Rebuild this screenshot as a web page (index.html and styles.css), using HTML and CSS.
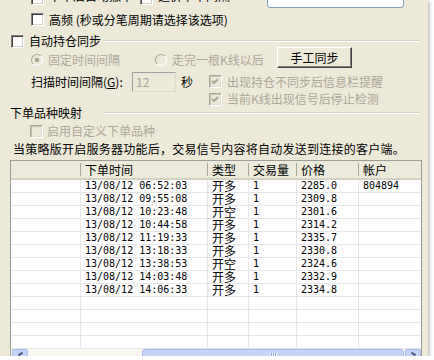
FILE: index.html
```html
<!DOCTYPE html>
<html lang="zh-CN">
<head>
    <meta charset="UTF-8">
    <meta name="viewport" content="width=device-width, initial-scale=1.0">
    <title>服务器设置</title>
    <link rel="stylesheet" href="styles.css">
</head>
<body>
    <div class="window">
        <!-- row cut off by the top edge -->
        <div class="row row-cut">
            <span class="chk"></span>
            <span class="lbl cut-a">下单后自动撤单</span>
            <span class="chk"></span>
            <span class="lbl cut-b">追价下单间隔</span>
            <span class="edit"></span>
        </div>

        <div class="row row-hf">
            <span class="chk"></span>
            <span class="lbl">高频 (秒或分笔周期请选择该选项)</span>
        </div>

        <div class="row group-title g-sync">
            <span class="chk"></span>
            <span class="lbl">自动持仓同步</span>
            <span class="rule"></span>
        </div>

        <div class="row row-radio">
            <span class="radio on"></span>
            <span class="lbl dis radio-a">固定时间间隔</span>
            <span class="radio second"></span>
            <span class="lbl dis radio-b">走完一根K线以后</span>
            <button class="btn" type="button">手工同步</button>
        </div>

        <div class="scan">
            <div class="row scan-left">
                <span class="lbl scan-lbl">扫描时间间隔(<u>G</u>):</span>
                <input class="edit-dis" type="text" value="12" disabled>
                <span class="lbl sec">秒</span>
            </div>
            <div class="scan-right">
                <div class="row chk-row1">
                    <span class="chk dis"><svg width="11" height="11" viewBox="0 0 11 11"><polyline points="2,5 4,7 8,3" fill="none" stroke="#aca899" stroke-width="2"/></svg></span>
                    <span class="lbl dis">出现持仓不同步后信息栏提醒</span>
                </div>
                <div class="row chk-row2">
                    <span class="chk dis"><svg width="11" height="11" viewBox="0 0 11 11"><polyline points="2,5 4,7 8,3" fill="none" stroke="#aca899" stroke-width="2"/></svg></span>
                    <span class="lbl dis">当前K线出现信号后停止检测</span>
                </div>
            </div>
        </div>

        <div class="row group-title g-map">
            <span class="lbl">下单品种映射</span>
            <span class="rule"></span>
        </div>

        <div class="row row-custom">
            <span class="chk dis"></span>
            <span class="lbl dis">启用自定义下单品种</span>
        </div>

        <div class="row row-note">
            <span class="lbl">当策略版开启服务器功能后，交易信号内容将自动发送到连接的客户端。</span>
        </div>

        <div class="listview">
            <div class="lv-head">
                <div class="hcell"></div>
                <div class="hcell">下单时间</div>
                <div class="hcell">类型</div>
                <div class="hcell">交易量</div>
                <div class="hcell">价格</div>
                <div class="hcell last">帐户</div>
            </div>
            <div class="lv-body" id="lvBody">
                <!-- rows are filled in by the script -->
            </div>
            <div class="hscroll">
                <span class="sb-btn sb-left"></span>
                <span class="sb-track"></span>
                <span class="sb-thumb"><span class="grip"></span></span>
                <span class="sb-btn sb-right"></span>
            </div>
        </div>
    </div>

    <script>
        document.addEventListener('DOMContentLoaded', function() {
            const lvBody = document.getElementById('lvBody');

            // orders sent to the clients
            const orders = [
                { time: '13/08/12 06:52:03', type: '开多', qty: 1, price: '2285.0', account: '804894' },
                { time: '13/08/12 09:55:08', type: '开多', qty: 1, price: '2309.8', account: '' },
                { time: '13/08/12 10:23:48', type: '开空', qty: 1, price: '2301.6', account: '' },
                { time: '13/08/12 10:44:58', type: '开多', qty: 1, price: '2314.2', account: '' },
                { time: '13/08/12 11:19:33', type: '开多', qty: 1, price: '2335.7', account: '' },
                { time: '13/08/12 13:18:33', type: '开多', qty: 1, price: '2330.8', account: '' },
                { time: '13/08/12 13:38:53', type: '开空', qty: 1, price: '2324.6', account: '' },
                { time: '13/08/12 14:03:48', type: '开多', qty: 1, price: '2332.9', account: '' },
                { time: '13/08/12 14:06:33', type: '开多', qty: 1, price: '2334.8', account: '' }
            ];

            orders.forEach(order => {
                const row = document.createElement('div');
                row.className = 'lv-row';
                row.innerHTML = `
                    <div class="cell"></div>
                    <div class="cell num">${order.time}</div>
                    <div class="cell cjk">${order.type}</div>
                    <div class="cell num">${order.qty}</div>
                    <div class="cell num">${order.price}</div>
                    <div class="cell num last">${order.account}</div>
                `;
                lvBody.appendChild(row);
            });

            // empty grid lines below the data
            for (let i = 0; i < 4; i++) {
                const row = document.createElement('div');
                row.className = 'lv-row';
                row.innerHTML = '<div class="cell"></div><div class="cell"></div><div class="cell"></div><div class="cell"></div><div class="cell"></div><div class="cell last"></div>';
                lvBody.appendChild(row);
            }
        });
    </script>
</body>
</html>
```

FILE: styles.css
```css
/* Windows XP style settings panel */
body {
    margin: 0;
    background: #fff;
    font-family: "Noto Sans CJK SC", "Liberation Sans", sans-serif;
    font-size: 12px;
    line-height: 14px;
    color: #000;
}

.window {
    width: 428px;
    height: 356px;
    background: #ece9d8;
    overflow: hidden;
    box-shadow: 1px 1px 4px rgba(0, 0, 0, 0.35);
}

.row {
    display: flex;
    align-items: center;
    white-space: nowrap;
}

.lbl {
    flex: none;
}

.dis {
    color: #aca899;
}

/* checkboxes */
.chk {
    flex: none;
    display: inline-flex;
    align-items: center;
    justify-content: center;
    width: 13px;
    height: 13px;
    box-sizing: border-box;
    background: #fff;
    border: 1px solid;
    border-color: #808080 #fff #fff #808080;
    box-shadow: inset 1px 1px #404040, inset -1px -1px #d4d0c8;
}

.chk.dis {
    background: #ece9d8;
    border-color: #aca899 #fff #fff #aca899;
    box-shadow: inset 1px 1px #c4c1b2, inset -1px -1px #e2dfd2;
}

.chk svg {
    display: block;
}

.radio {
    flex: none;
    width: 12px;
    height: 12px;
    box-sizing: border-box;
    border-radius: 50%;
    border: 1px solid;
    border-color: #aca899 #fff #fff #aca899;
    background: #ece9d8;
}

.radio.on {
    background: radial-gradient(circle, #aca899 0 2px, #ece9d8 2.5px);
}

/* cut off row */
.row-cut {
    height: 18px;
    margin-top: -10px;
    padding-left: 31px;
}

.row-cut .chk {
    margin-top: -2px;
}

.row-cut .lbl {
    align-self: flex-start;
    margin-left: 5px;
    margin-top: -1px;
}

.cut-a {
    width: 91px;
}

.cut-b {
    width: 96px;
}

.edit {
    align-self: flex-end;
    width: 137px;
    height: 20px;
    box-sizing: border-box;
    margin-left: 13px;
    background: #fff;
    border: 1px solid #7f9db9;
    border-radius: 3px;
}

.row-hf {
    height: 23px;
    padding-left: 31px;
}

.row-hf .lbl {
    margin-left: 5px;
}

/* group titles with etched line */
.group-title .rule {
    flex: 1;
    height: 0;
    border-top: 1px solid #d0d0bf;
    border-bottom: 1px solid #fff;
    margin-right: 9px;
}

.g-sync {
    height: 20px;
    padding-left: 11px;
}

.g-sync .lbl {
    margin-left: 5px;
}

.g-sync .rule {
    margin-left: 3px;
}

.row-radio {
    height: 18px;
    padding-left: 31px;
}

.row-radio .lbl {
    margin-left: 5px;
}

.radio-a {
    width: 72px;
}

.radio.second {
    margin-left: 35px;
}

.radio-b {
    width: 92px;
}

.btn {
    align-self: flex-start;
    margin-top: -4px;
    margin-left: 13px;
    width: 75px;
    height: 21px;
    box-sizing: border-box;
    padding: 0;
    background: #ece9d8;
    border: 1px solid;
    border-color: #fff #404040 #404040 #fff;
    box-shadow: inset -1px -1px #808080;
    font: inherit;
    color: #000;
}

/* scan interval block */
.scan {
    display: flex;
    padding: 3px 0 0 31px;
}

.scan-left {
    width: 178px;
    height: 19px;
}

.scan-lbl {
    width: 98px;
}

.edit-dis {
    width: 44px;
    height: 20px;
    box-sizing: border-box;
    margin: 0 0 0 3px;
    padding: 0 0 0 3px;
    background: #ece9d8;
    border: 1px solid;
    border-color: #a0a0a0 #dedcd1 #dedcd1 #a0a0a0;
    font: inherit;
    color: #aca899;
}

.sec {
    margin-left: 5px;
}

.scan-right .lbl {
    margin-left: 5px;
}

.chk-row1 {
    height: 19px;
}

.chk-row2 {
    height: 16px;
}

.g-map {
    height: 12px;
    padding-left: 10px;
}

.g-map .rule {
    margin-left: 21px;
}

.row-custom {
    height: 24px;
    padding-left: 30px;
}

.row-custom .lbl {
    margin-left: 4px;
}

.row-note {
    height: 12px;
    padding-left: 13px;
    letter-spacing: 0.25px;
}

/* list view */
.listview {
    width: 412px;
    margin: 5px 0 0 10px;
    box-sizing: border-box;
    border: 1px solid #9d9d97;
    background: #fff;
}

.lv-head,
.lv-row {
    display: grid;
    grid-template-columns: 70px 127px 41px 48px 62px 62px;
}

.lv-head {
    height: 19px;
    box-sizing: border-box;
    background: #ebeadb;
    border-bottom: 2px solid #d6d2c2;
}

.hcell {
    padding-left: 4px;
    line-height: 17px;
    background: linear-gradient(#aca899, #aca899) no-repeat right 0 top 2px / 1px 13px;
}

.hcell.last {
    background: none;
}

.lv-row {
    height: 13px;
    box-sizing: border-box;
    border-bottom: 1px solid #e6e6e6;
}

.cell {
    padding-left: 4px;
    border-right: 1px solid #e6e6e6;
    line-height: 12px;
}

.cell.last {
    border-right: none;
}

.cell.cjk {
    font-size: 12px;
    line-height: 12px;
}

.cell.num {
    font-family: "DejaVu Sans Mono", "Liberation Mono", monospace;
    font-size: 10px;
}

/* horizontal scrollbar */
.hscroll {
    display: flex;
    height: 17px;
    padding-left: 1px;
    background: #f7f6f0;
}

.sb-btn {
    width: 16px;
    box-sizing: border-box;
    background: #c4d4f8;
    border: 1px solid #a8bbe9;
    border-radius: 2px;
    position: relative;
}

.sb-left::after,
.sb-right::after {
    content: "";
    position: absolute;
    top: 3px;
    left: 5px;
    width: 5px;
    height: 2px;
    background: #4d6185;
    transform: rotate(-35deg);
}

.sb-right::after {
    transform: rotate(35deg);
}

.sb-track {
    width: 114px;
}

.sb-thumb {
    width: 262px;
    margin-right: 1px;
    box-sizing: border-box;
    background: #c6d4f8;
    border: 1px solid #a3b7e8;
    border-radius: 3px;
    display: flex;
    justify-content: center;
}

.grip {
    width: 7px;
    height: 3px;
    margin-top: 3px;
    background: repeating-linear-gradient(90deg, #eef3fd 0 1px, #8ea4d6 1px 2px);
}
```
